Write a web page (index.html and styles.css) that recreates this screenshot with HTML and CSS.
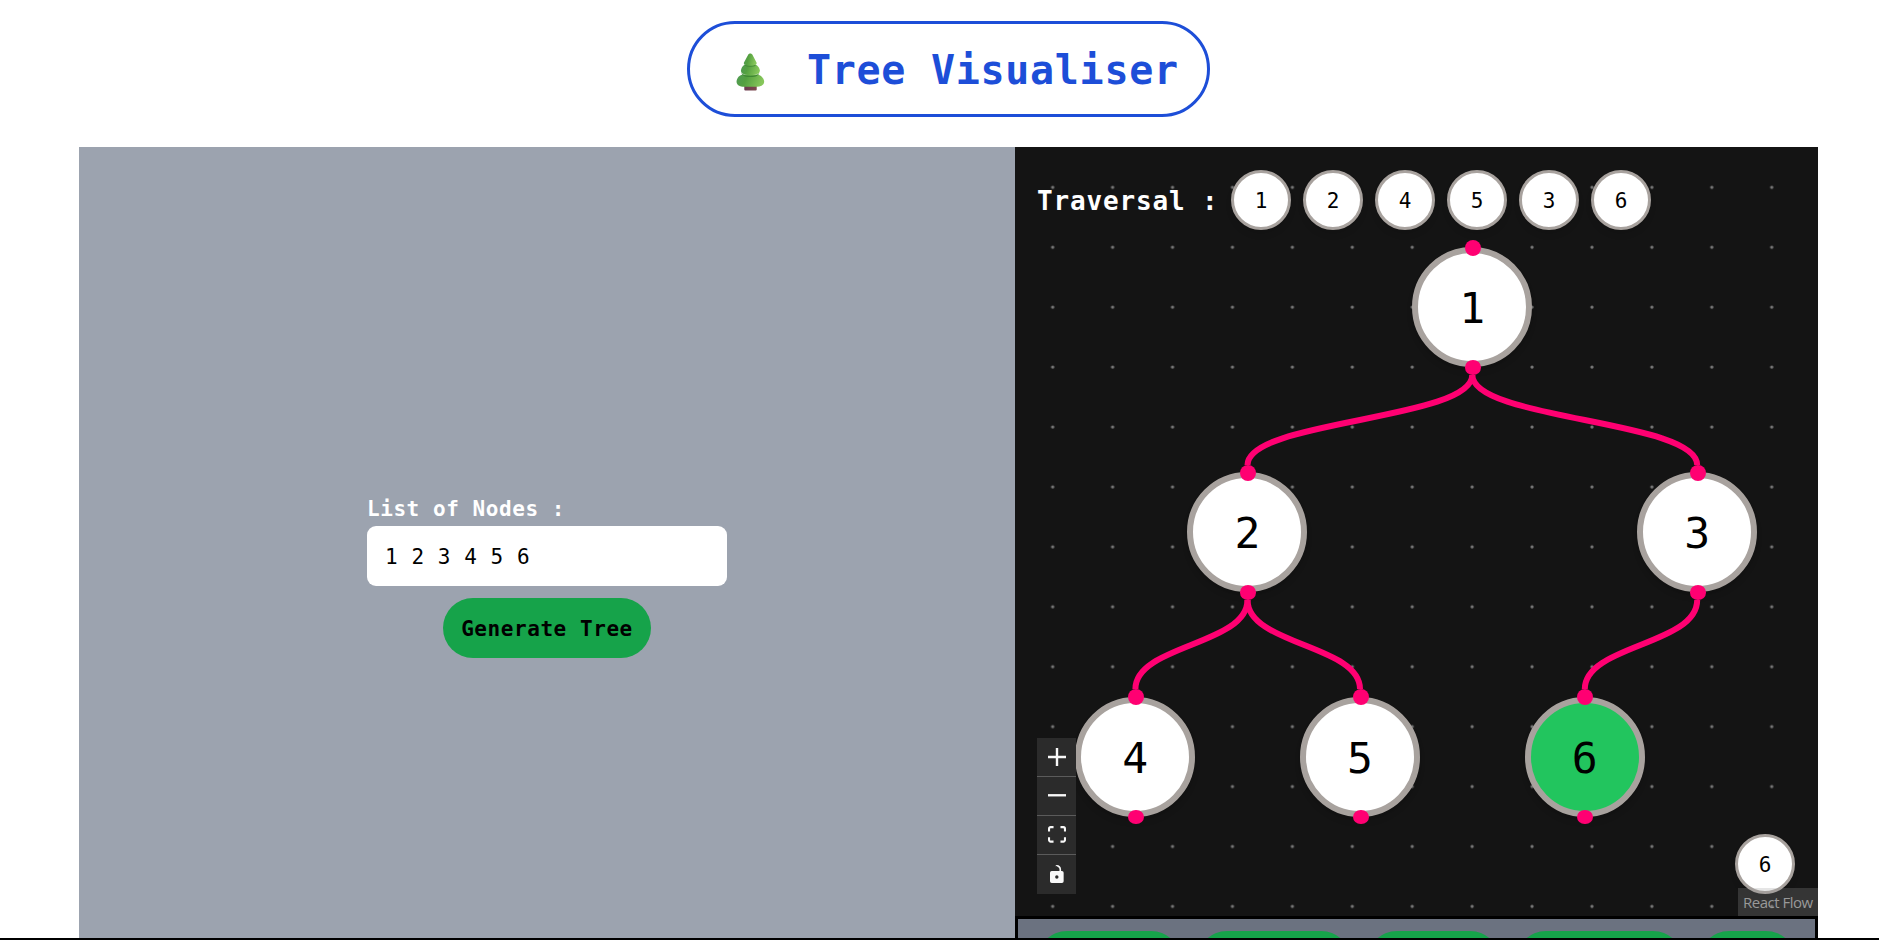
FILE: index.html
```html
<!DOCTYPE html>
<html lang="en">
<head>
<meta charset="utf-8">
<title>Tree Visualiser</title>
<link rel="stylesheet" href="styles.css">
</head>
<body>
<div class="app">
  <header class="header">
    <h1 class="title">
      <svg class="tree" width="29" height="38" viewBox="0 0 28 38" preserveAspectRatio="none">
        <defs>
          <linearGradient id="leaf" x1="0" y1="0" x2="1" y2="0.2">
            <stop offset="0" stop-color="#4f9a55"/><stop offset="0.4" stop-color="#54a040"/><stop offset="1" stop-color="#86c65a"/>
          </linearGradient>
          <linearGradient id="trunk" x1="0" y1="0" x2="1" y2="0">
            <stop offset="0" stop-color="#6b3a50"/><stop offset="1" stop-color="#7d4a4c"/>
          </linearGradient>
        </defs>
        <rect x="8" y="31" width="12" height="6.5" rx="1" fill="url(#trunk)"/>
        <path d="M7 21.5h13c3.500 0 7.200 3.800 7.200 7.200 0 3-3 5-7.200 5H8c-4.500 0-7.500-2-7.500-5 0-3.400 3-7.200 6.500-7.200z" fill="url(#leaf)"/>
        <path d="M5.200 19.800c2.500 4.400 14.700 4.400 17.300 0-.8 2.900-3 4.200-8.700 4.200s-7.800-1.300-8.600-4.200z" fill="#3f8733"/>
        <path d="M8.500 11.500h10.500c2.400 1.300 4 4 4 6 0 2.800-2.300 4.500-9.200 4.500S4.800 20.300 4.800 17.500c0-2 1.400-4.700 3.700-6z" fill="url(#leaf)"/>
        <path d="M8 11.300c2 2.200 9.600 2.200 11.600 0-.6 1.700-2 2.500-5.800 2.500s-5.200-.8-5.800-2.500z" fill="#3f8733"/>
        <path d="M13.800.5c1 0 1.700.5 2.200 1.500l3.800 7.400c.8 2-1.400 3-6 3s-6.900-1-6.100-3L11.600 2c.5-1 1.200-1.500 2.200-1.500z" fill="url(#leaf)"/>
      </svg>
      <span>Tree Visualiser</span>
    </h1>
  </header>
  <main class="main">
    <section class="form">
      <div class="field">
        <label class="label" for="nodes">List of Nodes :</label>
        <input class="input" id="nodes" value="1 2 3 4 5 6">
      </div>
      <button class="generate">Generate Tree</button>
    </section>
    <section class="visual">
      <div class="flow">
        <svg class="canvas" width="803" height="769">
          <defs>
            <pattern id="dots" x="7.700" y="10.300" width="59.920" height="59.920" patternUnits="userSpaceOnUse">
              <circle cx="30" cy="30" r="1.650" fill="#777"/>
            </pattern>
          </defs>
          <rect width="803" height="769" fill="url(#dots)"/>
          <g class="edges">
            <path d="M457.300 228C457.300 273 232.500 273 232.500 318"/>
            <path d="M457.300 228C457.300 273 682.200 273 682.200 318"/>
            <path d="M232.500 453C232.500 498 120.400 498 120.400 542"/>
            <path d="M232.500 453C232.500 498 345 498 345 542"/>
            <path d="M682.200 453C682.200 498 569.800 498 569.800 542"/>
          </g>
        </svg>
        <div class="node n1">1</div>
        <div class="node n2">2</div>
        <div class="node n3">3</div>
        <div class="node n4">4</div>
        <div class="node n5">5</div>
        <div class="node n6 active">6</div>
        <div class="traversal">
          <span class="caption">Traversal :</span>
          <span class="chip">1</span><span class="chip">2</span><span class="chip">4</span><span class="chip">5</span><span class="chip">3</span><span class="chip">6</span>
        </div>
        <div class="controls">
          <button class="control"><svg width="18" height="18" viewBox="0 0 32 32"><path d="M32 18.133H18.133V32h-4.266V18.133H0v-4.266h13.867V0h4.266v13.867H32z"/></svg></button>
          <button class="control"><svg width="18" height="3" viewBox="0 0 32 5"><path d="M0 0h32v4.200H0z"/></svg></button>
          <button class="control"><svg width="18" height="17" viewBox="0 0 32 30"><path d="M3.692 4.630c0-.530.400-.938.939-.938h5.215V0H4.708C2.130 0 0 2.054 0 4.630v5.216h3.692V4.631zM27.354 0h-5.200v3.692h5.170c.530 0 .984.400.984.939v5.215H32V4.631A4.624 4.624 0 0027.354 0zm.954 24.830c0 .532-.400.940-.939.940h-5.215v3.768h5.215c2.577 0 4.631-2.130 4.631-4.707v-5.139h-3.692v5.139zm-23.677.940a.919.919 0 01-.939-.940v-5.138H0v5.139c0 2.577 2.130 4.707 4.708 4.707h5.138V25.770H4.631z"/></svg></button>
          <button class="control"><svg width="14" height="18" viewBox="0 0 25 32"><path d="M21.333 10.667H19.810V7.619C19.810 3.429 16.380 0 12.190 0c-4.114 1.828-1.370 2.133.305 2.438 1.676.305 4.420 2.590 4.420 5.181v3.048H3.047A3.056 3.056 0 000 13.714v15.238A3.056 3.056 0 003.048 32h18.285a3.056 3.056 0 003.048-3.048V13.714a3.056 3.056 0 00-3.048-3.047zM12.190 24.533a3.056 3.056 0 01-3.047-3.047 3.056 3.056 0 013.047-3.048 3.056 3.056 0 013.048 3.048 3.056 3.056 0 01-3.048 3.047z"/></svg></button>
        </div>
        <span class="chip current">6</span>
        <a class="attribution">React Flow</a>
      </div>
      <div class="actions">
        <i class="action w1"></i><i class="action w2"></i><i class="action w3"></i><i class="action w4"></i><i class="action w5"></i>
      </div>
    </section>
  </main>
</div>
</body>
</html>
```
FILE: styles.css
```css
* { box-sizing: border-box; }
body {
  margin: 0;
  background: #fff;
  color: #000;
  font-family: "DejaVu Sans Mono", monospace;
  font-size: 21px;
  letter-spacing: 0.56px;
}
.app {
  height: 940px;
  overflow: hidden;
  display: flex;
  flex-direction: column;
  border-bottom: 2px solid #000;
}
.header {
  flex: none;
  height: 147px;
  padding: 21px 0 0 687px;
}
.title {
  display: flex;
  align-items: center;
  width: 523px;
  height: 96px;
  margin: 0;
  padding: 0 0 0 46px;
  gap: 42px;
  border: 3px solid #1d4ed8;
  border-radius: 48px;
  color: #1d4ed8;
  font-size: 40px;
  font-weight: 700;
  line-height: 48px;
  letter-spacing: 0.7px;
  white-space: nowrap;
}
.title span { padding-top: 1px; }
.tree { flex: none; margin-top: 5px; }
.main {
  flex: none;
  display: flex;
  height: 791px;
  padding-left: 79px;
}
.form {
  width: 936px;
  padding-top: 343px;
  display: flex;
  flex-direction: column;
  align-items: center;
  gap: 12px;
  background: #9ca3af;
}
.field { width: 360px; display: flex; flex-direction: column; }
.label {
  height: 36px;
  line-height: 38px;
  color: #fff;
  font-weight: 700;
}
.input {
  height: 60px;
  padding: 2px 18px 0;
  border: 0;
  border-radius: 9px;
  background: #fff;
  font: inherit;
  letter-spacing: inherit;
  color: #000;
}
.generate {
  width: 208px;
  height: 60px;
  padding: 2px 0 0;
  border: 0;
  border-radius: 30px;
  background: #16a34a;
  color: #000;
  font: inherit;
  font-weight: 700;
  letter-spacing: inherit;
}
.visual { width: 803px; display: flex; flex-direction: column; }
.flow {
  position: relative;
  flex: none;
  height: 769px;
  background: #141414;
  overflow: hidden;
}
.canvas { position: absolute; left: 0; top: 0; }
.edges path { fill: none; stroke: #ff0072; stroke-width: 6; }
.node {
  position: absolute;
  width: 120px;
  height: 120px;
  padding-top: 2px;
  display: flex;
  align-items: center;
  justify-content: center;
  border: 6px solid #a8a29e;
  border-radius: 50%;
  background: #fff;
  font-size: 43px;
  letter-spacing: 0;
  box-shadow: 0 5px 7px -1px rgba(0, 0, 0, 0.1), 0 2px 5px -2px rgba(0, 0, 0, 0.1);
}
.node::before,
.node::after {
  content: "";
  position: absolute;
  left: 46.500px;
  width: 16px;
  background: #ff0072;
}
.node::before { top: -13.500px; height: 16px; border-radius: 50%; }
.node::after { bottom: -13.700px; height: 14.500px; border-radius: 8px / 7.250px; }
.n1 { left: 397.200px; top: 100.300px; }
.n2 { left: 172.400px; top: 325.200px; }
.n3 { left: 622.200px; top: 325.200px; }
.n4 { left: 60.200px; top: 549.800px; }
.n5 { left: 285px; top: 549.800px; }
.n6 { left: 509.800px; top: 549.800px; }
.active { background: #22c55e; }
.traversal {
  position: absolute;
  left: 22px;
  top: 23px;
  display: flex;
  align-items: center;
  gap: 12px;
}
.caption {
  width: 182px;
  padding-top: 2px;
  color: #fff;
  font-size: 26px;
  font-weight: 700;
  letter-spacing: 0.850px;
  white-space: nowrap;
}
.chip {
  flex: none;
  width: 60px;
  height: 60px;
  padding-top: 2px;
  display: flex;
  align-items: center;
  justify-content: center;
  border: 3px solid #a8a29e;
  border-radius: 50%;
  background: #fff;
  letter-spacing: 0;
  box-shadow: 0 5px 7px -1px rgba(0, 0, 0, 0.1);
}
.current { position: absolute; left: 720px; top: 687px; }
.controls { position: absolute; left: 22px; top: 591px; width: 39px; }
.control {
  width: 39px;
  height: 39px;
  padding: 0 0 2px;
  display: flex;
  align-items: center;
  justify-content: center;
  border: 0;
  border-bottom: 1px solid #5b5b5b;
  background: #2b2b2b;
}
.control:first-child { padding-bottom: 0; }
.control:last-child { border-bottom: 0; }
.control svg { fill: #f8f8f8; }
.attribution {
  position: absolute;
  right: 0;
  bottom: 0;
  width: 80px;
  height: 28px;
  padding-left: 5px;
  background: rgba(150, 150, 150, 0.25);
  color: #999;
  font: 15px/29px "Open Sans", sans-serif;
  letter-spacing: -0.5px;
  white-space: nowrap;
}
.actions {
  flex: 1;
  min-height: 0;
  display: flex;
  gap: 16px;
  padding: 12px 0 0 19px;
  overflow: hidden;
  border: 3px solid #000;
  border-bottom: 0;
  background: #6b7280;
}
.action {
  flex: none;
  height: 60px;
  border-radius: 30px;
  background: #16a34a;
}
.w1 { width: 144px; }
.w2 { width: 154px; }
.w3 { width: 133px; }
.w4 { width: 167px; }
.w5 { width: 97px; }
```
